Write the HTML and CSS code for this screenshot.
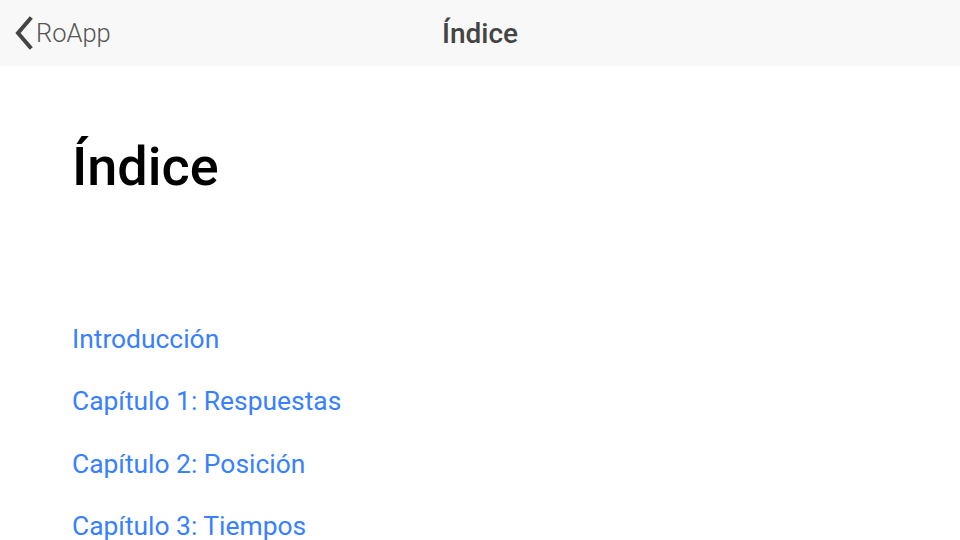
FILE: index.html
```html
<!DOCTYPE html>
<html lang="es">
<head>
<meta charset="utf-8">
<link rel="stylesheet" href="styles.css">
</head>
<body>
<header class="toolbar">
  <a class="back" href="#">
    <svg class="back-icon" width="20" height="34" viewBox="0 0 20 34"><path d="M16 3 L4 17 L16 31" fill="none" stroke="#444" stroke-width="4" stroke-linecap="square" stroke-linejoin="miter"/></svg>
    <span class="back-text">RoApp</span>
  </a>
  <div class="toolbar-title">Índice</div>
</header>
<main class="content">
  <h1 class="page-title">Índice</h1>
  <ul class="toc">
    <li><a href="#">Introducción</a></li>
    <li><a href="#">Capítulo 1: Respuestas</a></li>
    <li><a href="#">Capítulo 2: Posición</a></li>
    <li><a href="#">Capítulo 3: Tiempos</a></li>
  </ul>
</main>
</body>
</html>
```
FILE: styles.css
```css
html, body { margin: 0; padding: 0; }
body { font-family: Roboto, "Noto Sans", sans-serif; background: #fff; width: 960px; height: 540px; overflow: hidden; }
.toolbar { position: relative; height: 66px; background: #f8f8f8; display: flex; align-items: center; justify-content: center; }
.back { position: absolute; left: 14px; top: 0; height: 66px; display: flex; align-items: center; text-decoration: none; color: #555; }
.back-icon { display: block; margin-right: 2px; }
.back-text { font-size: 25.5px; font-weight: 300; color: #555; }
.toolbar-title { font-size: 28px; font-weight: 500; color: #444; }
.content { padding: 0 72px; }
.page-title { margin: 0; padding-top: 69px; font-size: 54px; font-weight: 500; color: #000; line-height: 64px; }
.toc { list-style: none; margin: 0; padding: 0; padding-top: 126px; display: flex; flex-direction: column; gap: 34.4px; }
.toc li { font-size: 26.4px; line-height: 28px; height: 28px; }
.toc a { color: #3880ff; text-decoration: none; }
```
